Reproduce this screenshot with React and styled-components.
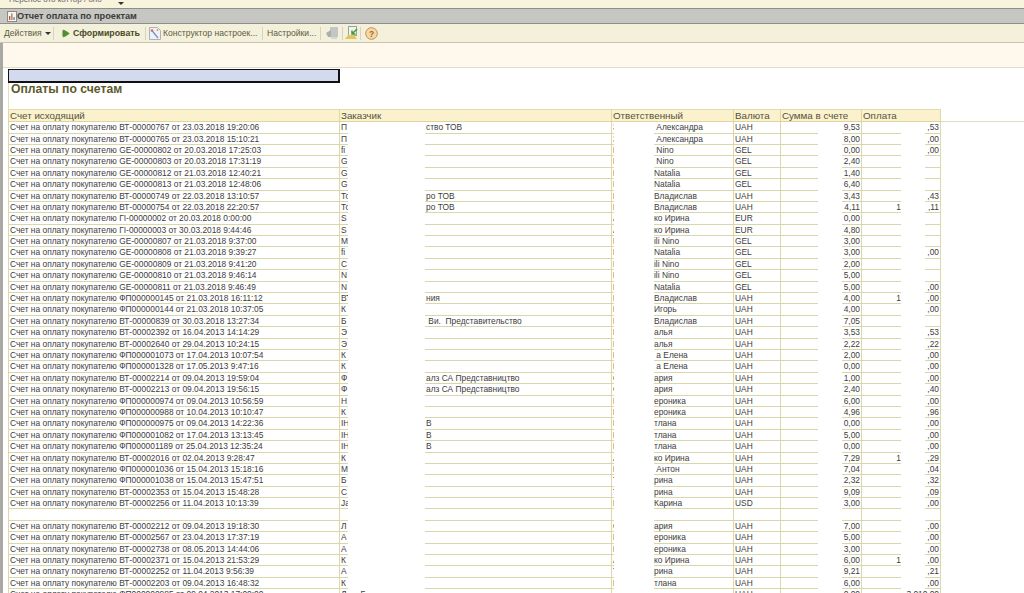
import React from 'react';
import styled, { createGlobalStyle } from 'styled-components';
import { Play } from 'lucide-react';

const Global = createGlobalStyle`
  html, body { margin: 0; padding: 0; height: 100%; overflow: hidden; background: #fff; }
  body { font-family: "Liberation Sans", Arial, sans-serif; color: #333; }
`;

const COLS = '331px 272px 122px 47px 81px 80px';
const HEAD_H = 13.2;
const ROW_H = 11.4;

// invoice, customer start, customer tail, manager tail, currency, sum, paid thousands, paid tail
const ROWS = [
  ['ВТ-00000767 от 23.03.2018 19:20:06', 'П', 'ство ТОВ', ' Александра', 'UAH', '9,53', '', ',53'],
  ['ВТ-00000765 от 23.03.2018 15:10:21', 'П', '', ' Александра', 'UAH', '8,00', '', ',00'],
  ['GE-00000802 от 20.03.2018 17:25:03', 'fi', '', ' Nino', 'GEL', '0,00', '', ',00'],
  ['GE-00000803 от 20.03.2018 17:31:19', 'G', '', ' Nino', 'GEL', '2,40', '', ''],
  ['GE-00000812 от 21.03.2018 12:40:21', 'G', '', 'Natalia', 'GEL', '1,40', '', ''],
  ['GE-00000813 от 21.03.2018 12:48:06', 'G', '', 'Natalia', 'GEL', '6,40', '', ''],
  ['ВТ-00000749 от 22.03.2018 13:10:57', 'То', 'ро ТОВ', 'Владислав', 'UAH', '3,43', '', ',43'],
  ['ВТ-00000754 от 22.03.2018 22:20:57', 'То', 'ро ТОВ', 'Владислав', 'UAH', '4,11', '1', ',11'],
  ['ГІ-00000002 от 20.03.2018 0:00:00', 'S', '', 'ко Ирина', 'EUR', '0,00', '', ''],
  ['ГІ-00000003 от 30.03.2018 9:44:46', 'S', '', 'ко Ирина', 'EUR', '4,80', '', ''],
  ['GE-00000807 от 21.03.2018 9:37:00', 'M', '', 'ili Nino', 'GEL', '3,00', '', ''],
  ['GE-00000808 от 21.03.2018 9:39:27', 'fi', '', 'Natalia', 'GEL', '3,00', '', ',00'],
  ['GE-00000809 от 21.03.2018 9:41:20', 'C', '', 'ili Nino', 'GEL', '2,00', '', ''],
  ['GE-00000810 от 21.03.2018 9:46:14', 'N', '', 'ili Nino', 'GEL', '5,00', '', ''],
  ['GE-00000811 от 21.03.2018 9:46:49', 'N', '', 'Natalia', 'GEL', '5,00', '', ',00'],
  ['ФП000000145 от 21.03.2018 16:11:12', 'ВТ', 'ния', 'Владислав', 'UAH', '4,00', '1', ',00'],
  ['ФП000000144 от 21.03.2018 10:37:05', 'К', '', 'Игорь', 'UAH', '4,00', '', ',00'],
  ['ВТ-00000839 от 30.03.2018 13:27:34', 'Б', ' Ви.  Представительство', 'Владислав', 'UAH', '7,05', '', ''],
  ['ВТ-00002392 от 16.04.2013 14:14:29', 'Э', '', 'алья', 'UAH', '3,53', '', ',53'],
  ['ВТ-00002640 от 29.04.2013 10:24:15', 'Э', '', 'алья', 'UAH', '2,22', '', ',22'],
  ['ФП000001073 от 17.04.2013 10:07:54', 'К', '', ' а Елена', 'UAH', '2,00', '', ',00'],
  ['ФП000001328 от 17.05.2013 9:47:16', 'К', '', ' а Елена', 'UAH', '0,00', '', ',00'],
  ['ВТ-00002214 от 09.04.2013 19:59:04', 'Ф', 'алз СА Представництво', 'ария', 'UAH', '1,00', '', ',00'],
  ['ВТ-00002213 от 09.04.2013 19:56:15', 'Ф', 'алз СА Представництво', 'ария', 'UAH', '2,40', '', ',40'],
  ['ФП000000974 от 09.04.2013 10:56:59', 'Н', '', 'ероника', 'UAH', '6,00', '', ',00'],
  ['ФП000000988 от 10.04.2013 10:10:47', 'К', '', 'ероника', 'UAH', '4,96', '', ',96'],
  ['ФП000000975 от 09.04.2013 14:22:36', 'ІН', 'В', 'тлана', 'UAH', '0,00', '', ',00'],
  ['ФП000001082 от 17.04.2013 13:13:45', 'ІН', 'В', 'тлана', 'UAH', '5,00', '', ',00'],
  ['ФП000001189 от 25.04.2013 12:35:24', 'ІН', 'В', 'тлана', 'UAH', '0,00', '', ',00'],
  ['ВТ-00002016 от 02.04.2013 9:28:47', 'К', '', 'ко Ирина', 'UAH', '7,29', '1', ',29'],
  ['ФП000001036 от 15.04.2013 15:18:16', 'М', '', ' Антон', 'UAH', '7,04', '', ',04'],
  ['ФП000001038 от 15.04.2013 15:47:51', 'Б', '', 'рина', 'UAH', '2,32', '', ',32'],
  ['ВТ-00002353 от 15.04.2013 15:48:28', 'С', '', 'рина', 'UAH', '9,09', '', ',09'],
  ['ВТ-00002256 от 11.04.2013 10:13:39', 'Ja', '', 'Карина', 'USD', '3,00', '', ',00'],
  null,
  ['ВТ-00002212 от 09.04.2013 19:18:30', 'Л', '', 'ария', 'UAH', '7,00', '', ',00'],
  ['ВТ-00002567 от 23.04.2013 17:37:19', 'А', '', 'ероника', 'UAH', '5,00', '', ',00'],
  ['ВТ-00002738 от 08.05.2013 14:44:06', 'А', '', 'ероника', 'UAH', '3,00', '', ',00'],
  ['ВТ-00002371 от 15.04.2013 21:53:29', 'К', '', 'ко Ирина', 'UAH', '6,00', '1', ',00'],
  ['ВТ-00002252 от 11.04.2013 9:56:39', 'А', '', 'рина', 'UAH', '9,21', '', ',21'],
  ['ВТ-00002203 от 09.04.2013 16:48:32', 'К', '', 'тлана', 'UAH', '6,00', '', ',00'],
  ['ФП000000985 от 09.04.2013 17:00:00', 'Л      Б', '', '', 'UAH', '0,00', '', '3 010,00'],
];

// first letter of the surname, mostly hidden by the white patch
const managerLead = name => {
  if (name.includes('Алекс')) return 'З';
  if (name.includes('Ирина')) return 'А';
  if (name === 'ария') return 'С';
  if (name === 'рина') return 'Т';
  return name ? 'Б' : '';
};

const Page = styled.div`
  width: 1024px;
  height: 593px;
  display: flex;
  flex-direction: column;
  overflow: hidden;
`;

const TopStrip = styled.div`
  height: 8px;
  flex: none;
  background: #f7f3dc;
  overflow: hidden;
  display: flex;
  align-items: flex-start;
  padding-left: 9px;
  font-size: 8px;
  color: #666;
`;

const TopText = styled.span`
  width: 109px;
  margin-top: -5px;
  line-height: 9px;
  white-space: nowrap;
`;

const Caret = styled.span`
  width: 0;
  height: 0;
  margin-top: ${p => p.$top || 0}px;
  border: 3px solid transparent;
  border-top: 3px solid #333;
  border-bottom: 0;
`;

const TitleBar = styled.div`
  height: 14px;
  flex: none;
  background: #c6c6c2;
  border-top: 1px solid #8f8f88;
  display: flex;
  align-items: center;
  padding-left: 7px;
  font-size: 9.2px;
  font-weight: bold;
  color: #3c3c38;
`;

const Toolbar = styled.div`
  height: 18px;
  flex: none;
  background: #f3f0dc;
  border-top: 1px solid #8f8f88;
  border-bottom: 1px solid #c8c5ae;
  display: flex;
  align-items: center;
  padding-left: 4px;
  font-size: 8.6px;
  color: #5f5d40;
`;

const ToolItem = styled.span`
  display: flex;
  align-items: center;
  box-sizing: border-box;
  width: ${p => p.$w}px;
  gap: ${p => p.$gap || 3}px;
  padding-left: ${p => p.$left || 0}px;
  height: 13px;
  white-space: nowrap;
  font-weight: ${p => (p.$bold ? 'bold' : 'normal')};
  font-size: ${p => (p.$bold ? '8.8px' : 'inherit')};
  color: ${p => (p.$bold ? '#4a4a28' : 'inherit')};
  border-right: ${p => (p.$plain ? 0 : '1px solid #d8d4bb')};
`;

const Body = styled.div`
  flex: 1;
  min-height: 0;
  display: flex;
  background: #fef9ec;
  border-left: 3px solid #a9a9a3;
`;

const Sheet = styled.div`
  flex: 1;
  min-width: 0;
  margin-top: 24px;
  border-top: 1px solid #e0ddcc;
  background: #fff;
  padding-left: 5px;
  position: relative;
  overflow: hidden;
`;

const Selected = styled.div`
  width: 329px;
  height: 11px;
  margin-top: 1px;
  background: #d3daf0;
  border: 1px solid #111;
  border-right-width: 2px;
  border-bottom-width: 2px;
`;

const Heading = styled.h1`
  margin: 0;
  height: 26px;
  padding: 0 0 0 2px;
  box-sizing: border-box;
  font-size: 12.2px;
  line-height: 13px;
  font-weight: bold;
  color: #5e5a2d;
  border-left: 1px solid #e6dfb4;
`;

const TableArea = styled.div`
  position: relative;
  width: 933px;
`;

const RowGrid = styled.div`
  display: grid;
  grid-template-columns: ${COLS};
  box-sizing: border-box;
  height: ${p => (p.$head ? HEAD_H : ROW_H)}px;
  background: ${p => (p.$head ? '#fbf1cd' : '#fff')};
  border-bottom: 1px solid ${p => (p.$head ? '#dcd5a0' : '#d9d6ac')};
  border-top: ${p => (p.$head ? '1px solid #e4dca8' : '0')};
`;

const Cell = styled.div`
  box-sizing: border-box;
  display: flex;
  justify-content: ${p => (p.$right ? 'flex-end' : 'flex-start')};
  padding: 0 ${p => (p.$right ? '1px' : '0')} 0 ${p => (p.$right ? '0' : '1px')};
  border-left: 1px solid #dcd8a8;
  font-size: ${p => (p.$head ? '9.8px' : '8.4px')};
  line-height: ${p => (p.$head ? '12px' : '10.4px')};
  color: ${p => (p.$head ? '#55533a' : '#3d3d3d')};
  white-space: pre;
  overflow: hidden;
  &:last-child { border-right: 1px solid #dcd8a8; }
`;

// fixed width start of a cell, the part left of a white patch
const Lead = styled.span`
  flex: none;
  width: ${p => p.$w}px;
  text-align: ${p => (p.$right ? 'right' : 'left')};
`;

const Tail = styled.span`
  flex: 1;
  text-align: ${p => (p.$right ? 'right' : 'left')};
`;

const SideLine = styled.div`
  position: absolute;
  left: 938px;
  right: 0;
  top: 53px;
  border-top: 1px solid #e2dcb8;
`;

/* white redaction patches that sit over the table columns */
const Patch = styled.div`
  position: absolute;
  top: ${HEAD_H}px;
  height: ${41 * ROW_H}px;
  left: ${p => p.$left}px;
  width: ${p => p.$width}px;
  background: #fff;
`;

const Icon = ({ kind }) => {
  if (kind === 'doc') return (
    <svg width="10" height="11" viewBox="0 0 10 11">
      <rect x=".5" y=".5" width="9" height="10" fill="#f4f4f0" stroke="#8a8a88" />
      <rect x="2" y="5" width="1.3" height="4" fill="#c0504d" />
      <rect x="4.2" y="2.5" width="1.3" height="6.5" fill="#b5762e" />
      <rect x="6.4" y="6" width="1.3" height="3" fill="#6a7fb0" />
    </svg>
  );
  if (kind === 'wizard') return (
    <svg width="12" height="13" viewBox="0 0 12 13">
      <path d="M.5.5h8l3 3v9H.5z" fill="#eef1f7" stroke="#a8b2c6" />
      <path d="M2.5 3l6.5 8" stroke="#7b8db0" strokeWidth="1.2" />
      <circle cx="3" cy="3.5" r="1.3" fill="#d66" />
      <path d="M7.5 3h2M8.5 2v2" stroke="#d9a33a" />
    </svg>
  );
  if (kind === 'gray') return (
    <svg width="12" height="12" viewBox="0 0 12 12">
      <rect x="4" y="0" width="8" height="10" fill="#c3c6c4" />
      <path d="M0 6l5-3v7H2z" fill="#aab0ae" />
      <rect x="5" y="10" width="6" height="2" fill="#d4d6d2" />
    </svg>
  );
  if (kind === 'export') return (
    <svg width="13" height="14" viewBox="0 0 13 14">
      <rect x="3.5" y=".5" width="8" height="9" fill="#f2f5ee" stroke="#9aa39a" />
      <path d="M0 13l3-4h6l3 4z" fill="#e6c65c" />
      <path d="M12 3L7 8M7 4.5V8h3.5" fill="none" stroke="#3f9a3a" strokeWidth="1.5" />
    </svg>
  );
  return (
    <svg width="13" height="13" viewBox="0 0 13 13">
      <circle cx="6.5" cy="6.5" r="5.8" fill="#f4d9a8" stroke="#c98e45" />
      <text x="6.5" y="9.6" textAnchor="middle" fontSize="8.5" fontWeight="bold" fontFamily="Liberation Sans" fill="#a8641e">?</text>
    </svg>
  );
};

const App = () => (
  <Page>
    <Global />
    <TopStrip>
      <TopText>Перенос ото коттор / оно</TopText>
      <Caret $top={2} />
    </TopStrip>
    <TitleBar><Icon kind="doc" />Отчет оплата по проектам</TitleBar>
    <Toolbar>
      <ToolItem $w={50}>Действия <Caret /></ToolItem>
      <ToolItem $bold $w={92} $left={7} $gap={3}>
        <Play size={9} fill="#4f8f2f" color="#4f8f2f" />Сформировать
      </ToolItem>
      <ToolItem $w={117} $left={3} $gap={2}><Icon kind="wizard" />Конструктор настроек...</ToolItem>
      <ToolItem $w={58} $left={4}>Настройки...</ToolItem>
      <ToolItem $w={22} $left={5}><Icon kind="gray" /></ToolItem>
      <ToolItem $w={18} $left={2}><Icon kind="export" /></ToolItem>
      <ToolItem $plain $w={20} $left={4}><Icon kind="help" /></ToolItem>
    </Toolbar>
    <Body>
      <Sheet>
        <Selected />
        <Heading>Оплаты по счетам</Heading>
        <SideLine />
        <TableArea>
          <RowGrid $head>
            {['Счет исходящий', 'Заказчик', 'Ответственный', 'Валюта', 'Сумма в счете', 'Оплата'].map(h => (
              <Cell $head key={h}>{h}</Cell>
            ))}
          </RowGrid>
          {ROWS.map((r, i) => (
            <RowGrid key={i}>
              <Cell>{r && `Счет на оплату покупателю ${r[0]}`}</Cell>
              <Cell>
                <Lead $w={85}>{r && r[1]}</Lead>
                <Tail>{r && r[2]}</Tail>
              </Cell>
              <Cell>
                <Lead $w={41}>{r && managerLead(r[3])}</Lead>
                <Tail>{r && r[3]}</Tail>
              </Cell>
              <Cell>{r && r[4]}</Cell>
              <Cell $right>{r && r[5]}</Cell>
              <Cell $right>
                <Lead $right $w={39}>{r && r[6]}</Lead>
                <Tail $right>{r && r[7]}</Tail>
              </Cell>
            </RowGrid>
          ))}
          <Patch $left={340} $width={77} />
          <Patch $left={606} $width={40} />
          <Patch $left={810} $width={24} />
          <Patch $left={893} $width={24} />
        </TableArea>
      </Sheet>
    </Body>
  </Page>
);

export default App;
